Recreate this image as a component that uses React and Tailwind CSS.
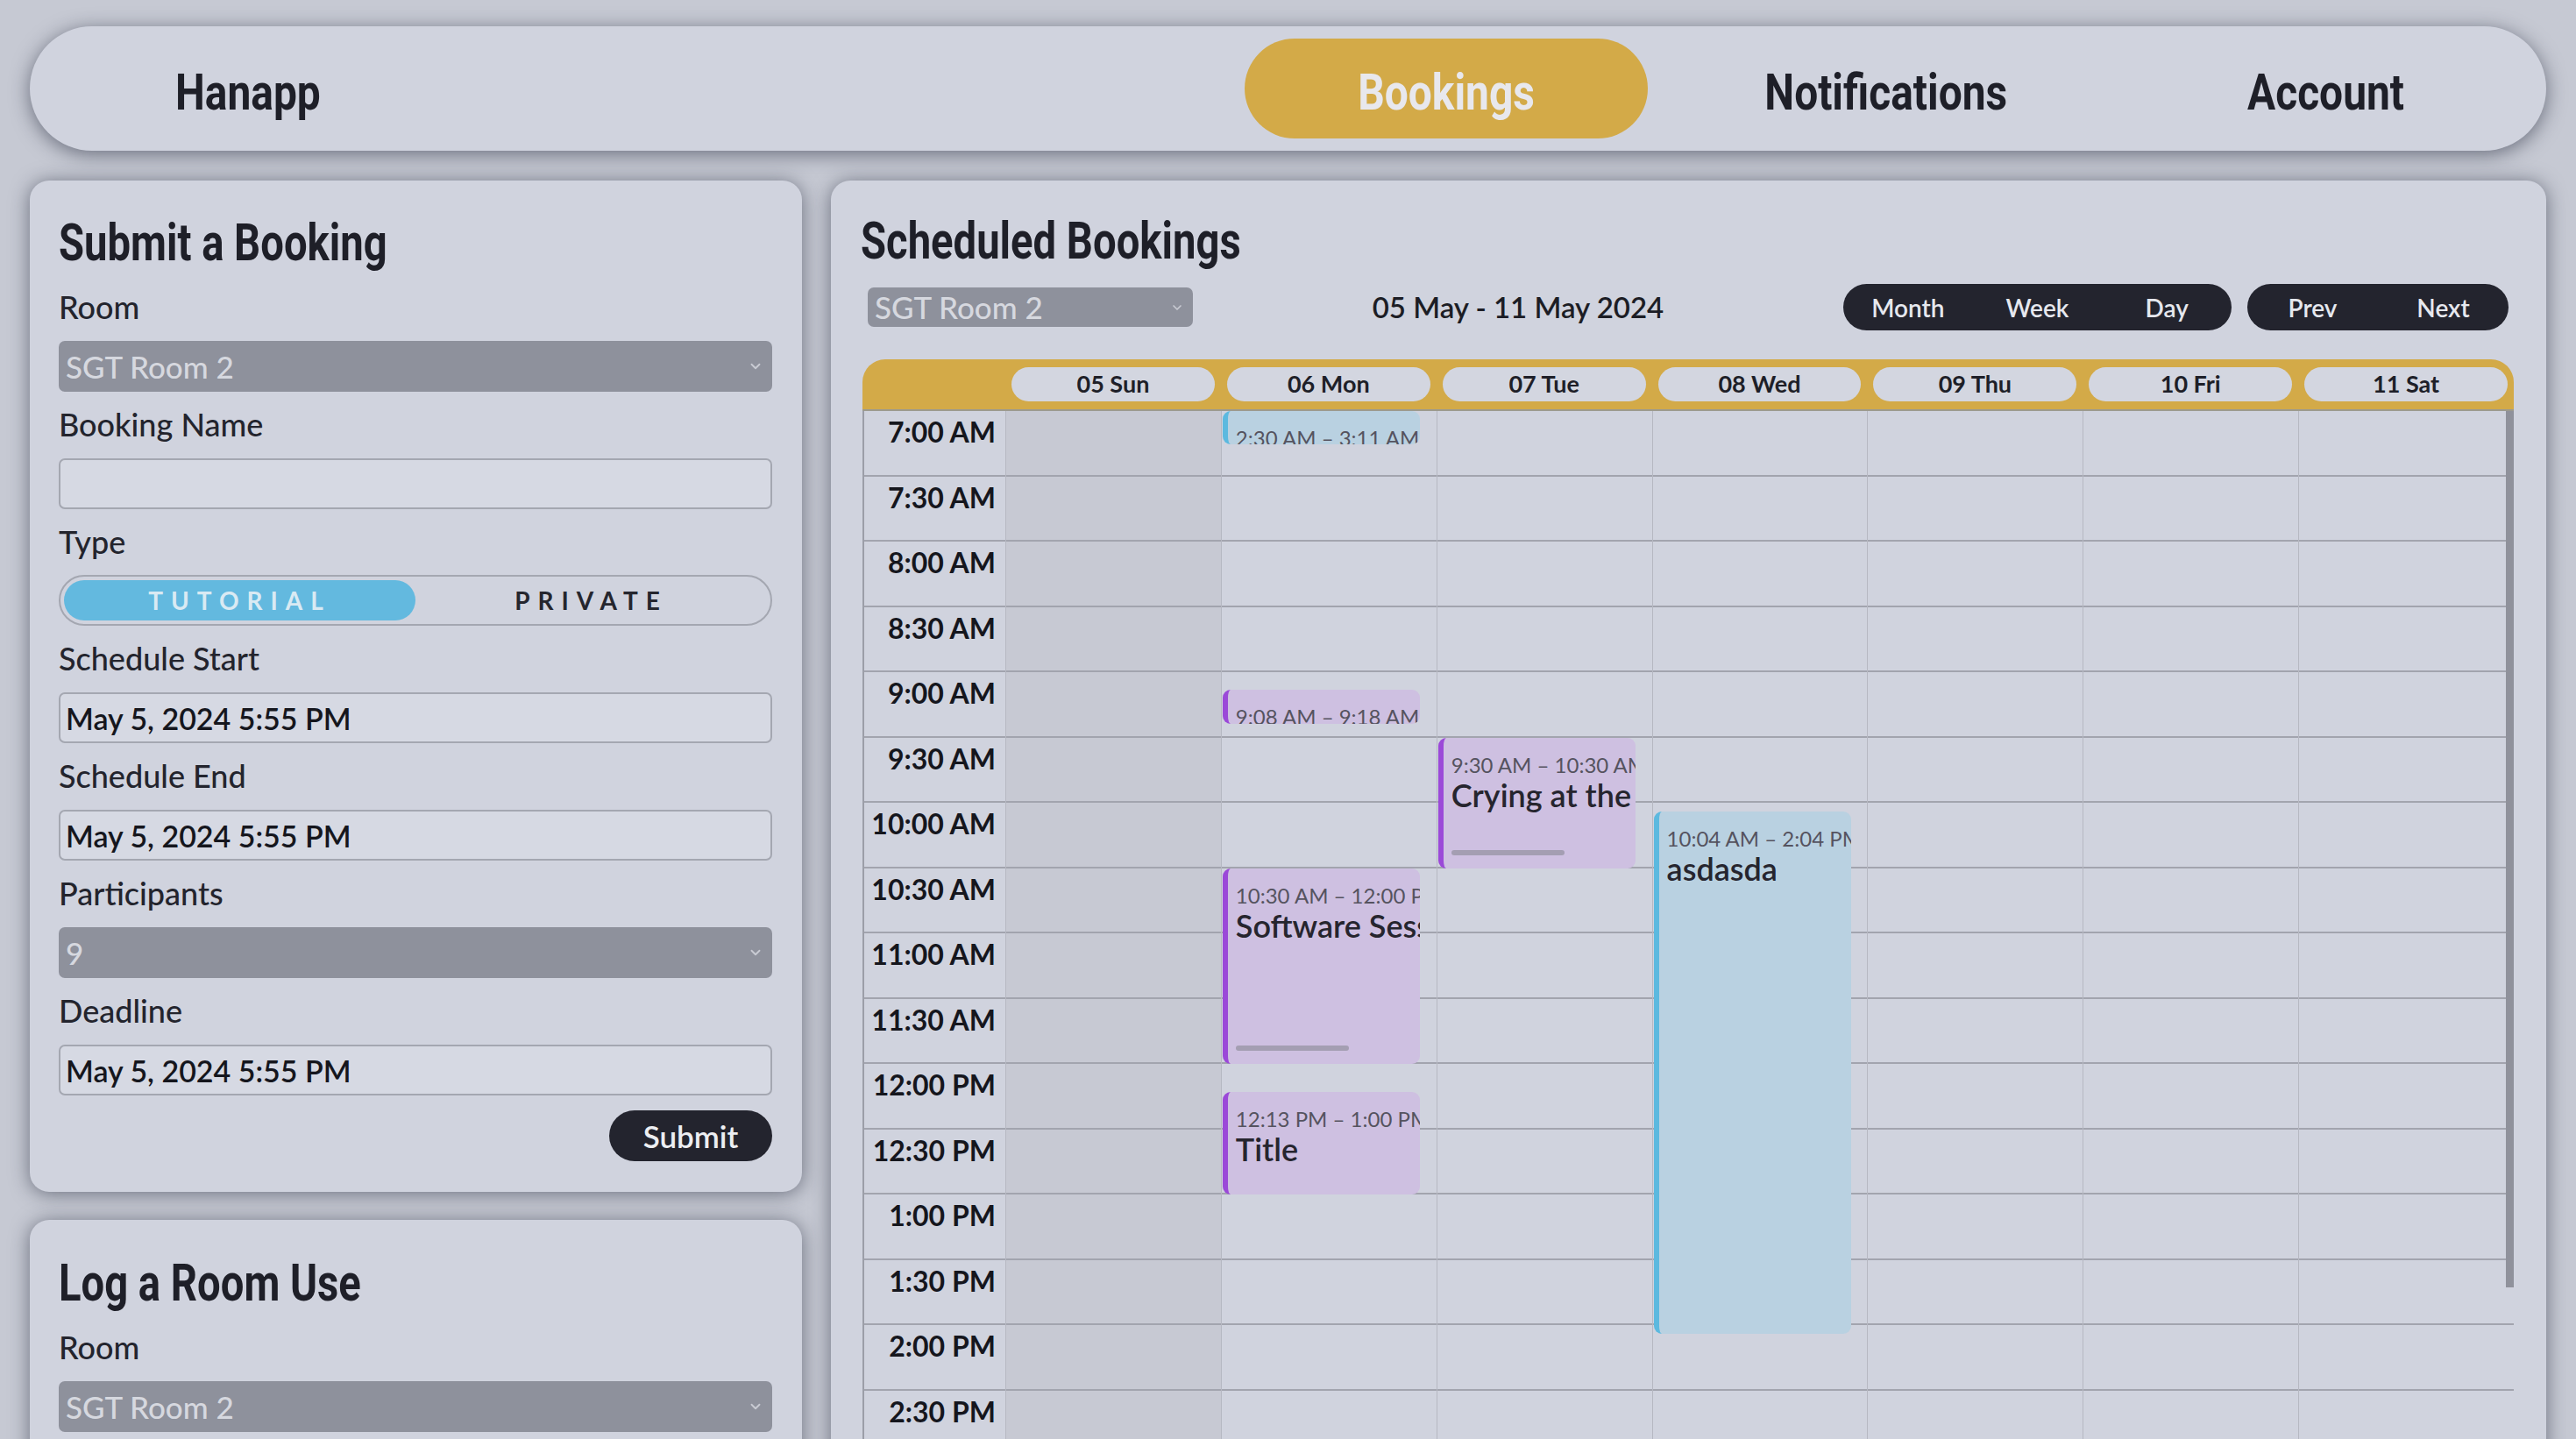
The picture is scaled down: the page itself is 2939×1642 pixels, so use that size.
import React from 'react';
import { ChevronDown } from 'lucide-react';

const HEAD = "font-['Roboto',sans-serif] font-bold text-[#1e1f28]";

const times = [
  '7:00 AM', '7:30 AM', '8:00 AM', '8:30 AM', '9:00 AM', '9:30 AM', '10:00 AM', '10:30 AM',
  '11:00 AM', '11:30 AM', '12:00 PM', '12:30 PM', '1:00 PM', '1:30 PM', '2:00 PM', '2:30 PM',
  '3:00 PM', '3:30 PM',
];

const days = ['05 Sun', '06 Mon', '07 Tue', '08 Wed', '09 Thu', '10 Fri', '11 Sat'];

const ROW = 74.5;
const px = (min) => (min * ROW) / 30;

// minutes are counted from 7:00 AM
const events = {
  1: [
    { start: 0, end: 0, min: 38, tone: 'blue', time: '2:30 AM – 3:11 AM' },
    { start: 128, end: 138, min: 39, tone: 'purple', time: '9:08 AM – 9:18 AM' },
    { start: 210, end: 300, tone: 'purple', time: '10:30 AM – 12:00 PM', title: 'Software Session', bar: true },
    { start: 313, end: 360, tone: 'purple', time: '12:13 PM – 1:00 PM', title: 'Title' },
  ],
  2: [
    { start: 150, end: 210, tone: 'purple', time: '9:30 AM – 10:30 AM', title: 'Crying at the library', bar: true },
  ],
  3: [
    { start: 184, end: 424, tone: 'blue', time: '10:04 AM – 2:04 PM', title: 'asdasda' },
  ],
};

const tones = {
  blue: 'bg-[#b9d1e1] border-[#5cb9df]',
  purple: 'bg-[#cec0e1] border-[#9b49d8]',
};

const Heading = ({ children }) => (
  <h2 className={`${HEAD} h-[64px] leading-[56px] text-[59px] whitespace-nowrap`}>
    <span className="inline-block origin-left scale-x-[0.8]">{children}</span>
  </h2>
);

const Label = ({ children }) => (
  <div className="h-[40px] leading-[40px] text-[36px] font-medium text-[#23242d]">{children}</div>
);

const Select = ({ value }) => (
  <div className="mt-[19px] h-[58px] rounded-[7px] bg-[#8e919c] flex items-center justify-between pl-[8px] pr-[10px]">
    <span className="text-[35px] text-[#d6d8df] font-medium">{value}</span>
    <ChevronDown className="w-[18px] h-[18px] text-[#c9cbd3]" strokeWidth={2.5} />
  </div>
);

const Input = ({ value }) => (
  <div className="mt-[19px] h-[58px] rounded-[7px] bg-[#d6d9e3] border-2 border-[#a4a7b1] flex items-center pl-[6px]">
    <span className="text-[34px] font-semibold text-[#15161d]">{value}</span>
  </div>
);

const Field = ({ children }) => <div className="mt-[17px] first:mt-[20px]">{children}</div>;

const Event = ({ ev }) => {
  const top = px(ev.start);
  const height = ev.min ? ev.min : px(ev.end - ev.start);
  return (
    <div
      className={`absolute left-[1px] w-[225px] z-10 overflow-hidden rounded-[9px] border-l-[6px] pl-[9px] pt-[16px] ${tones[ev.tone]}`}
      style={{ top, height }}
    >
      <div className="h-[30px] leading-[30px] text-[24px] text-[#55535f] whitespace-nowrap">{ev.time}</div>
      {ev.title && (
        <div className="h-[38px] leading-[38px] text-[36px] font-semibold text-[#26252e] whitespace-nowrap">{ev.title}</div>
      )}
      {ev.bar && <div className="absolute left-[9px] bottom-[15px] w-[129px] h-[6px] rounded-sm bg-[#a49eb2]" />}
    </div>
  );
};

const NavItem = ({ children, active }) => (
  <div className="w-[502px] px-[21px]">
    <div className={`h-[114px] pt-[10px] rounded-full flex items-center justify-center ${active ? 'bg-[#d3aa48]' : ''}`}>
      <span className={`${HEAD} inline-block text-[57px] scale-x-[0.84] whitespace-nowrap ${active ? '!text-[#e8e8ed]' : ''}`}>{children}</span>
    </div>
  </div>
);

export default function App() {
  return (
    <div className="h-[1642px] overflow-hidden bg-[#c6c9d3] p-[34px] pt-[30px] font-['Lato',sans-serif] text-[#1e1f28]">
      {/* Nav */}
      <nav className="h-[142px] rounded-full bg-[#d0d3de] shadow-[0_4px_22px_rgba(30,34,52,0.55)] flex items-center">
        <div className={`${HEAD} ml-[166px] pt-[10px] text-[57px]`}>
          <span className="inline-block origin-left scale-x-[0.84]">Hanapp</span>
        </div>
        <div className="flex-1" />
        <NavItem active>Bookings</NavItem>
        <NavItem>Notifications</NavItem>
        <NavItem>Account</NavItem>
      </nav>

      <div className="mt-[34px] flex gap-[33px] items-start">
        {/* Left column */}
        <div className="w-[881px] flex flex-col gap-[32px]">
          <div className="rounded-[22px] bg-[#d0d3de] shadow-[0_2px_22px_rgba(30,34,52,0.55)] pl-[33px] pr-[34px] pt-[43px] pb-[35px]">
            <Heading>Submit a Booking</Heading>
            <Field><Label>Room</Label><Select value="SGT Room 2" /></Field>
            <Field><Label>Booking Name</Label><Input value="" /></Field>
            <Field>
              <Label>Type</Label>
              <div className="mt-[18px] h-[58px] rounded-full border-2 border-[#a4a7b1] flex items-center p-[4px]">
                <div className="flex-1 h-full rounded-full bg-[#63b9df] flex items-center justify-center text-[28px] font-bold tracking-[0.32em] text-[#d9eaf3]">TUTORIAL</div>
                <div className="flex-1 h-full flex items-center justify-center text-[28px] font-bold tracking-[0.32em] text-[#25262e]">PRIVATE</div>
              </div>
            </Field>
            <Field><Label>Schedule Start</Label><Input value="May 5, 2024 5:55 PM" /></Field>
            <Field><Label>Schedule End</Label><Input value="May 5, 2024 5:55 PM" /></Field>
            <Field><Label>Participants</Label><Select value="9" /></Field>
            <Field><Label>Deadline</Label><Input value="May 5, 2024 5:55 PM" /></Field>
            <div className="mt-[17px] flex justify-end">
              <button className="h-[58px] w-[186px] rounded-full bg-[#23242e] text-[35px] font-semibold text-[#eceef2]">Submit</button>
            </div>
          </div>

          <div className="rounded-[22px] bg-[#d0d3de] shadow-[0_2px_22px_rgba(30,34,52,0.55)] pl-[33px] pr-[34px] pt-[44px] pb-[35px]">
            <Heading>Log a Room Use</Heading>
            <Field><Label>Room</Label><Select value="SGT Room 2" /></Field>
            <Field><Label>Notes</Label><Input value="" /></Field>
          </div>
        </div>

        {/* Right panel */}
        <div className="flex-1 rounded-[22px] bg-[#d0d3de] shadow-[0_2px_22px_rgba(30,34,52,0.55)] pl-[34px] pr-[37px] pt-[41px] pb-[40px]">
          <Heading>Scheduled Bookings</Heading>

          <div className="mt-[13px] h-[53px] flex items-center justify-between pl-[8px] pr-[6px]">
            <div className="w-[371px] h-[45px] rounded-[7px] bg-[#8e919c] flex items-center justify-between pl-[8px] pr-[10px]">
              <span className="text-[35px] text-[#d6d8df] font-medium">SGT Room 2</span>
              <ChevronDown className="w-[16px] h-[16px] text-[#c9cbd3]" strokeWidth={2.5} />
            </div>
            <div className="text-[33px] font-semibold text-[#1c1d25]">05 May - 11 May 2024</div>
            <div className="flex gap-[18px]">
              <div className="h-[53px] w-[443px] rounded-full bg-[#23242e] flex text-[28px] font-semibold text-[#e6e8ee]">
                <span className="flex-1 flex items-center justify-center">Month</span>
                <span className="flex-1 flex items-center justify-center">Week</span>
                <span className="flex-1 flex items-center justify-center">Day</span>
              </div>
              <div className="h-[53px] w-[298px] rounded-full bg-[#23242e] flex text-[28px] font-semibold text-[#e6e8ee]">
                <span className="flex-1 flex items-center justify-center">Prev</span>
                <span className="flex-1 flex items-center justify-center">Next</span>
              </div>
            </div>
          </div>

          {/* Calendar */}
          <div className="mt-[33px] ml-[2px]">
            <div className="h-[59px] rounded-t-[26px] bg-[#d3aa48] flex items-center border-b-2 border-[#9c9a8e]">
              <div className="w-[163px]" />
              {days.map((d) => (
                <div key={d} className="flex-1 px-[7px]">
                  <div className="h-[39px] rounded-full bg-[#d3d6e0] flex items-center justify-center text-[27px] font-bold text-[#1e1f28]">{d}</div>
                </div>
              ))}
            </div>

            <div className="relative flex border-l-2 border-[#9c9ea8]">
              <div className="w-[161px] shrink-0">
                {times.map((t) => (
                  <div key={t} className="h-[74.5px] border-b-2 border-[#a2a4ae] text-right pr-[11px] pt-[6px] text-[32px] leading-[36px] font-bold text-[#15161d]">{t}</div>
                ))}
              </div>
              {days.map((d, i) => (
                <div key={d} className={`relative flex-1 border-l border-[#b6b8c2] ${i === 0 ? 'bg-[#c7c9d3]' : ''}`}>
                  {times.map((t) => (
                    <div key={t} className="h-[74.5px] border-b-2 border-[#a2a4ae]" />
                  ))}
                  {(events[i] || []).map((ev, k) => (
                    <Event key={k} ev={ev} />
                  ))}
                </div>
              ))}
              <div className="absolute right-0 top-0 w-[9px] h-[1000px] bg-[#8f919b] z-20" />
            </div>
          </div>
        </div>
      </div>
    </div>
  );
}
